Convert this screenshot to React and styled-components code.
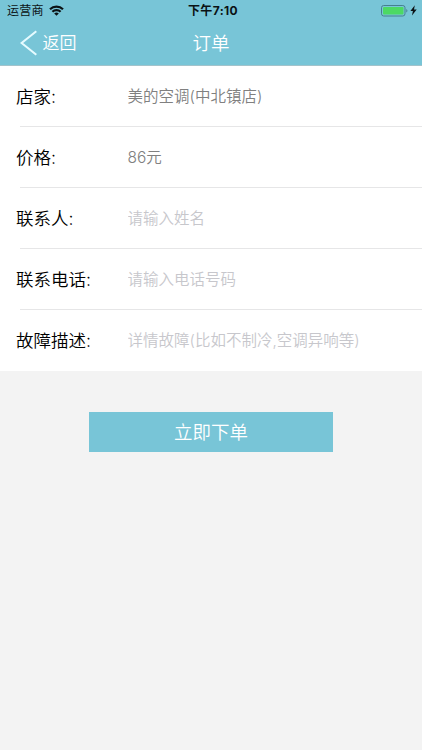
import styled, { createGlobalStyle } from "styled-components";

const GlobalStyle = createGlobalStyle`
    * {
        box-sizing: border-box;
    }
    body {
        margin: 0;
        background-color: #f3f3f3;
        font-family: "Inter", "Noto Sans CJK SC", sans-serif;
    }
`;

const Page = styled.div`
    min-height: 100vh;
    background-color: #f3f3f3;
`;

const Header = styled.header`
    height: 66px;
    background-color: #78c5d7;
    border-bottom: 1px solid #a3c3cb;
`;

const StatusBar = styled.div`
    display: grid;
    grid-template-columns: 1fr auto 1fr;
    align-items: center;
    height: 21px;
    padding: 0 5px 0 7px;
    font-size: 12px;
    line-height: 20px;
    color: #0b1214;
`;

const Carrier = styled.div`
    display: flex;
    align-items: center;
    gap: 5px;
    letter-spacing: 0.3px;
`;

const Clock = styled.div`
    padding-left: 2px;
    font-weight: 700;
    letter-spacing: 0.35px;
`;

const Power = styled.div`
    display: flex;
    align-items: center;
    justify-content: flex-end;
    gap: 2px;
`;

const NavBar = styled.nav`
    display: grid;
    grid-template-columns: 1fr auto 1fr;
    align-items: center;
    height: 44px;
    padding: 0 20px;
    color: #fff;
`;

const BackButton = styled.button`
    display: flex;
    align-items: center;
    gap: 4.5px;
    padding: 0;
    border: 0;
    background: transparent;
    color: inherit;
    font-family: inherit;
    font-size: 17px;
    font-weight: 350;
    line-height: 26px;
`;

const NavTitle = styled.h1`
    margin: 0;
    font-size: 18.5px;
    font-weight: 350;
    line-height: 28px;
`;

const Form = styled.form`
    margin: 0;
`;

const Fields = styled.div`
    background-color: #fff;
`;

const Row = styled.label`
    display: flex;
    align-items: center;
    height: 61px;
    padding-left: 16px;
    background: linear-gradient(#e6e6e7, #e6e6e7) no-repeat 20px 100% / 100% 1px;
    &:last-child {
        background: none;
    }
`;

const Label = styled.span`
    width: 111.5px;
    font-size: 17.5px;
    font-weight: 350;
    line-height: 26px;
    color: #000;
`;

const Value = styled.span`
    font-size: 15.5px;
    font-weight: 350;
    line-height: 24px;
    color: #808080;
`;

const Input = styled.input`
    flex: 1;
    min-width: 0;
    height: 24px;
    padding: 0;
    border: 0;
    outline: 0;
    background: transparent;
    font-family: inherit;
    font-size: 15.5px;
    font-weight: 350;
    color: #808080;
    &::placeholder {
        color: #c7c7cc;
        opacity: 1;
    }
`;

const SubmitButton = styled.button`
    display: block;
    width: 244px;
    height: 40px;
    margin: 41px 0 0 89px;
    padding: 0;
    border: 0;
    background-color: #78c5d7;
    color: #fff;
    font-family: inherit;
    font-size: 18.5px;
    font-weight: 350;
    line-height: 40px;
`;

function WifiIcon() {
    return (
        <svg width="15" height="11" viewBox="0 0 15 11">
            <g fill="none" stroke="#0b1214" strokeWidth="2.2">
                <path d="M1 4.2a9.3 9.3 0 0 1 13 0" />
                <path d="M3.4 6.8a5.9 5.9 0 0 1 8.2 0" />
            </g>
            <path d="M5.2 8.5a3.3 3.3 0 0 1 4.6 0L7.5 10.8z" fill="#0b1214" />
        </svg>
    );
}

function BatteryIcon() {
    return (
        <svg width="27" height="12" viewBox="0 0 27 12">
            <rect
                x="0.5"
                y="0.5"
                width="23.5"
                height="10.5"
                rx="2.2"
                fill="none"
                stroke="#46808e"
            />
            <rect x="2" y="2" width="20.5" height="7.5" rx="1" fill="#4cd964" />
            <path d="M25.3 4v3.6a2 2 0 0 0 0-3.6z" fill="#46808e" />
        </svg>
    );
}

function BoltIcon() {
    return (
        <svg width="7" height="11" viewBox="0 0 7 11">
            <path d="M4.8 0.3L0.4 6h2.5L2 10.5L6.7 4.6H4z" fill="#0b1214" />
        </svg>
    );
}

function BackIcon() {
    return (
        <svg width="18" height="26" viewBox="0 0 18 26">
            <path
                d="M16.3 1.3L1.6 13L16.3 24.7"
                fill="none"
                stroke="#e6fbff"
                strokeWidth="2.1"
            />
        </svg>
    );
}

const fields = [
    { label: "店家:", value: "美的空调(中北镇店)" },
    { label: "价格:", value: "86元" },
    { label: "联系人:", placeholder: "请输入姓名" },
    { label: "联系电话:", placeholder: "请输入电话号码" },
    { label: "故障描述:", placeholder: "详情故障(比如不制冷,空调异响等)" },
];

export default function App() {
    return (
        <Page>
            <GlobalStyle />
            <Header>
                <StatusBar>
                    <Carrier>
                        运营商
                        <WifiIcon />
                    </Carrier>
                    <Clock>下午7:10</Clock>
                    <Power>
                        <BatteryIcon />
                        <BoltIcon />
                    </Power>
                </StatusBar>
                <NavBar>
                    <BackButton type="button">
                        <BackIcon />
                        返回
                    </BackButton>
                    <NavTitle>订单</NavTitle>
                </NavBar>
            </Header>
            <Form onSubmit={(ev) => ev.preventDefault()}>
                <Fields>
                    {fields.map(({ label, value, placeholder }) => (
                        <Row key={label}>
                            <Label>{label}</Label>
                            {value ? (
                                <Value>{value}</Value>
                            ) : (
                                <Input placeholder={placeholder} />
                            )}
                        </Row>
                    ))}
                </Fields>
                <SubmitButton type="submit">立即下单</SubmitButton>
            </Form>
        </Page>
    );
}
